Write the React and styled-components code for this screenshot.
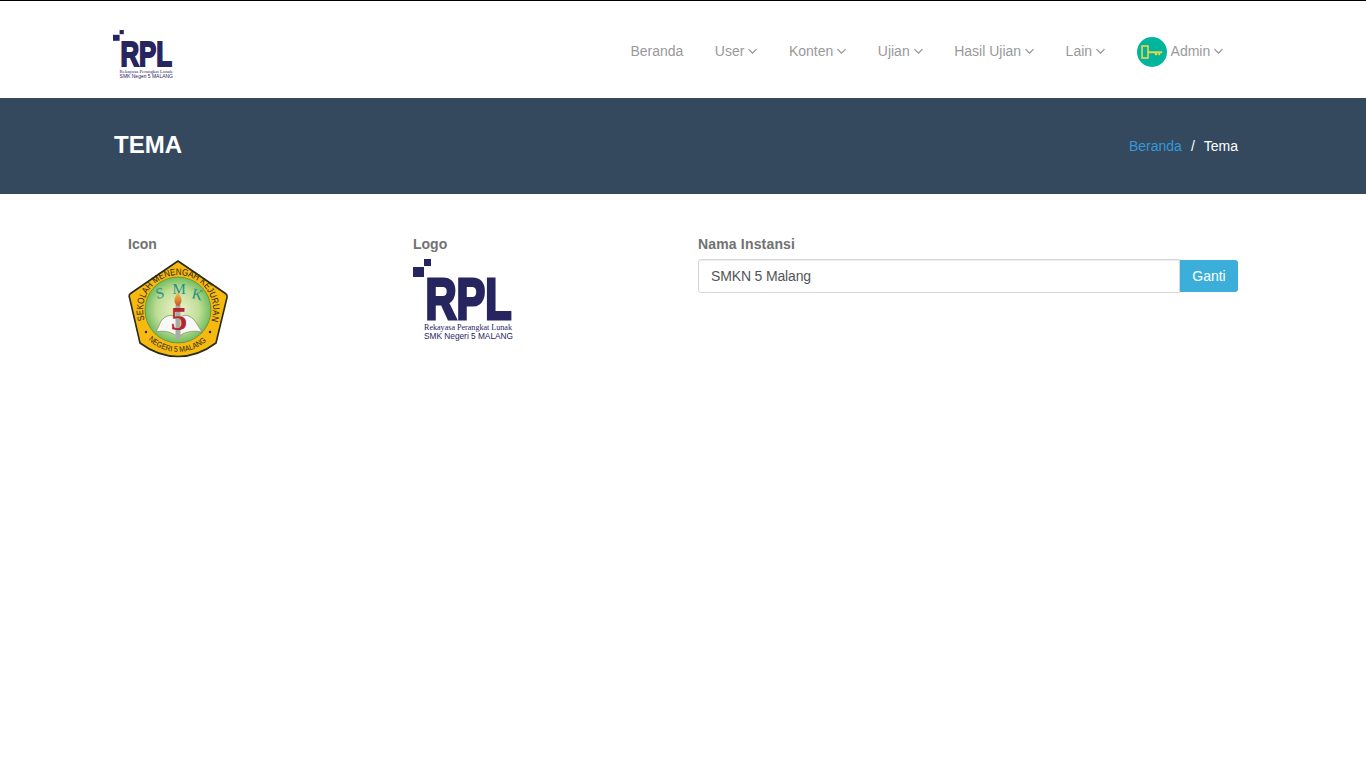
import React from 'react';
import styled, { createGlobalStyle } from 'styled-components';

const GlobalStyle = createGlobalStyle`
  html, body { margin: 0; padding: 0; background: #fff; }
  body { font-family: "Liberation Sans", Arial, sans-serif; font-size: 14px; color: #555; }
`;

const Header = styled.header`
  border-top: 1px solid #000;
  height: 97px;
  background: #fff;
`;

const Container = styled.div`
  width: 1140px;
  margin: 0 auto;
  height: 100%;
  display: flex;
  align-items: center;
  justify-content: space-between;
`;

const NavBar = styled(Container)`
  box-sizing: border-box;
  padding-top: 3px;
`;

const Brand = styled.a`
  display: block;
  margin-top: 8px;
`;

const Nav = styled.nav`
  display: flex;
  align-items: center;
  margin-right: 14px;
`;

const NavItem = styled.a`
  display: flex;
  align-items: center;
  gap: 4px;
  padding: 0 15.75px;
  height: 30px;
  color: #999;
  font-size: 14px;
  white-space: nowrap;
  cursor: pointer;
`;

const Avatar = styled.span`
  width: 30px;
  height: 30px;
  margin-top: 2px;
  border-radius: 50%;
  background: #00b59c;
  display: flex;
  align-items: center;
  justify-content: center;
`;

const Banner = styled.section`
  height: 96px;
  background: #34495e;
`;

const Title = styled.h1`
  margin: 0 0 2px 1px;
  font-size: 24px;
  line-height: 30px;
  font-weight: 700;
  color: #fff;
`;

const Breadcrumb = styled.div`
  display: flex;
  gap: 9px;
  margin-right: 15px;
  font-size: 14px;
  color: #fff;
`;

const Crumb = styled.a`
  color: #3498db;
`;

const Content = styled.main`
  width: 1140px;
  margin: 0 auto;
  padding-top: 40px;
  display: grid;
  grid-template-columns: 285px 285px 570px;
`;

const Column = styled.div`
  padding: 0 15px;
`;

const Label = styled.label`
  display: block;
  margin-bottom: 5px;
  font-size: 14px;
  line-height: 20px;
  font-weight: 700;
  color: #727272;
  letter-spacing: ${props => (props.wide ? '0.17px' : '0')};
`;

const InputGroup = styled.div`
  display: flex;
  align-items: center;
`;

const Input = styled.input`
  flex: 1;
  min-width: 0;
  height: 34px;
  box-sizing: border-box;
  padding: 0 12px;
  border: 1px solid #d6d6d6;
  border-radius: 3px 0 0 3px;
  box-shadow: inset 0 1px 1px rgba(0, 0, 0, 0.075);
  outline: 0;
  font: 14px "Liberation Sans", Arial, sans-serif;
  letter-spacing: -0.15px;
  color: #555;
`;

const Button = styled.button`
  width: 58px;
  height: 32px;
  padding: 0;
  border: 0;
  border-radius: 0 3px 3px 0;
  background: #3bafda;
  color: #fff;
  font: 14px "Liberation Sans", Arial, sans-serif;
`;

const Art = styled.svg`
  display: block;
`;

const Chevron = () => (
  <svg width="9" height="10" viewBox="0 0 9 10" fill="none" stroke="#8f8f8f" strokeWidth="1.1">
    <path d="M0.5 3.2 L4.5 7.2 L8.5 3.2" />
  </svg>
);

const KeyIcon = () => (
  <svg width="22" height="14" viewBox="0 0 22 14" fill="none" stroke="#f2d14f">
    <rect x="1" y="1" width="6" height="12" strokeWidth="1.6" />
    <path d="M7 6.5 H21 V8 H19 V10 H17.5 V8 H16 V10 H14 V8 H7 Z" fill="#f2d14f" strokeWidth="0.4" />
  </svg>
);

// same artwork for the small header logo and the big one in the form
const RplLogo = ({ width }) => (
  <Art width={width} viewBox="0 0 100 83">
    <g fill="#27255f">
      <rect x="11" y="0" width="7" height="7" />
      <rect x="0" y="8" width="11" height="10" />
      <text
        x="12.5"
        y="59.7"
        fontFamily="Liberation Sans"
        fontWeight="700"
        fontSize="57"
        textLength="86"
        lengthAdjust="spacingAndGlyphs"
        stroke="#27255f"
        strokeWidth="3.2"
      >
        RPL
      </text>
      <text
        x="11"
        y="71"
        fontFamily="Liberation Serif"
        fontSize="8.4"
        textLength="88"
        lengthAdjust="spacingAndGlyphs"
      >
        Rekayasa Perangkat Lunak
      </text>
      <text
        x="11"
        y="79.5"
        fontFamily="Liberation Sans"
        fontSize="8.4"
        textLength="89"
        lengthAdjust="spacingAndGlyphs"
      >
        SMK Negeri 5 MALANG
      </text>
    </g>
  </Art>
);

const Emblem = () => (
  <Art width="100" height="100" viewBox="0 0 100 100">
    <defs>
      <radialGradient id="field" cx="50%" cy="50%" r="50%">
        <stop offset="0%" stopColor="#eef3cf" />
        <stop offset="65%" stopColor="#c0dd96" />
        <stop offset="100%" stopColor="#6fbd60" />
      </radialGradient>
      <linearGradient id="flame" x1="0" y1="0" x2="0" y2="1">
        <stop offset="0%" stopColor="#f0c040" />
        <stop offset="100%" stopColor="#c8552a" />
      </linearGradient>
      <path id="arcTop" d="M16.5 61.2 A35 35 0 1 1 83.5 61.2" />
      <path id="arcBottom" d="M20.3 80.7 A42 42 0 0 0 79.7 80.7" />
    </defs>
    <path
      d="M50 2 L97.5 34.5 Q99.5 36 99 38.5 L88 84 Q70 97.5 50 97.5 Q30 97.5 12 84 L1.5 38.5 Q0.5 36 2.5 34.5 Z"
      fill="#f5b90f"
      stroke="#2a2a1e"
      strokeWidth="1.6"
      strokeLinejoin="round"
    />
    <circle cx="50" cy="51" r="33" fill="url(#field)" stroke="#4d7a3a" strokeWidth="0.6" />
    <text fontFamily="Liberation Sans" fontSize="9.4" fill="#2a2412">
      <textPath href="#arcTop" textLength="131" lengthAdjust="spacingAndGlyphs">SEKOLAH MENENGAH KEJURUAN</textPath>
    </text>
    <text fontFamily="Liberation Sans" fontSize="8" fill="#2a2412">
      <textPath href="#arcBottom" textLength="64" lengthAdjust="spacingAndGlyphs">NEGERI 5 MALANG</textPath>
    </text>
    <circle cx="18" cy="73" r="1.2" fill="#2a2412" />
    <circle cx="82" cy="73" r="1.2" fill="#2a2412" />
    <g fontFamily="Liberation Serif" fontSize="15" fill="#2b8f86">
      <text x="29" y="40" transform="rotate(-14 29 40)">S</text>
      <text x="44.5" y="35">M</text>
      <text x="63" y="39" transform="rotate(14 63 39)">K</text>
    </g>
    <path
      d="M50 60 C44 54 38 56 33 62 L28 73 C36 71 44 73 50 78 C56 73 64 71 74 73 L67 62 C62 56 56 54 50 60 Z"
      fill="#f8f8f4"
      stroke="#7b8a6c"
      strokeWidth="0.7"
    />
    <rect x="47.5" y="46" width="5" height="34" fill="#a7aca6" />
    <path d="M50 34 C54 38 55 43 51 47 H49 C45 43 46 38 50 34 Z" fill="url(#flame)" />
    <text x="51" y="71" textAnchor="middle" fontFamily="Liberation Serif" fontWeight="700" fontSize="33" fill="#b4252c">5</text>
  </Art>
);

const menu = ['User', 'Konten', 'Ujian', 'Hasil Ujian', 'Lain'];

export default function App() {
  return (
    <>
      <GlobalStyle />
      <Header>
        <NavBar>
          <Brand><RplLogo width={60} /></Brand>
          <Nav>
            <NavItem>Beranda</NavItem>
            {menu.map(item => (
              <NavItem key={item}>
                {item}
                <Chevron />
              </NavItem>
            ))}
            <NavItem>
              <Avatar><KeyIcon /></Avatar>
              Admin
              <Chevron />
            </NavItem>
          </Nav>
        </NavBar>
      </Header>
      <Banner>
        <Container>
          <Title>TEMA</Title>
          <Breadcrumb>
            <Crumb>Beranda</Crumb>
            <span>/</span>
            <span>Tema</span>
          </Breadcrumb>
        </Container>
      </Banner>
      <Content>
        <Column>
          <Label>Icon</Label>
          <Emblem />
        </Column>
        <Column>
          <Label>Logo</Label>
          <RplLogo width={100} />
        </Column>
        <Column>
          <Label wide>Nama Instansi</Label>
          <InputGroup>
            <Input defaultValue="SMKN 5 Malang" />
            <Button>Ganti</Button>
          </InputGroup>
        </Column>
      </Content>
    </>
  );
}
